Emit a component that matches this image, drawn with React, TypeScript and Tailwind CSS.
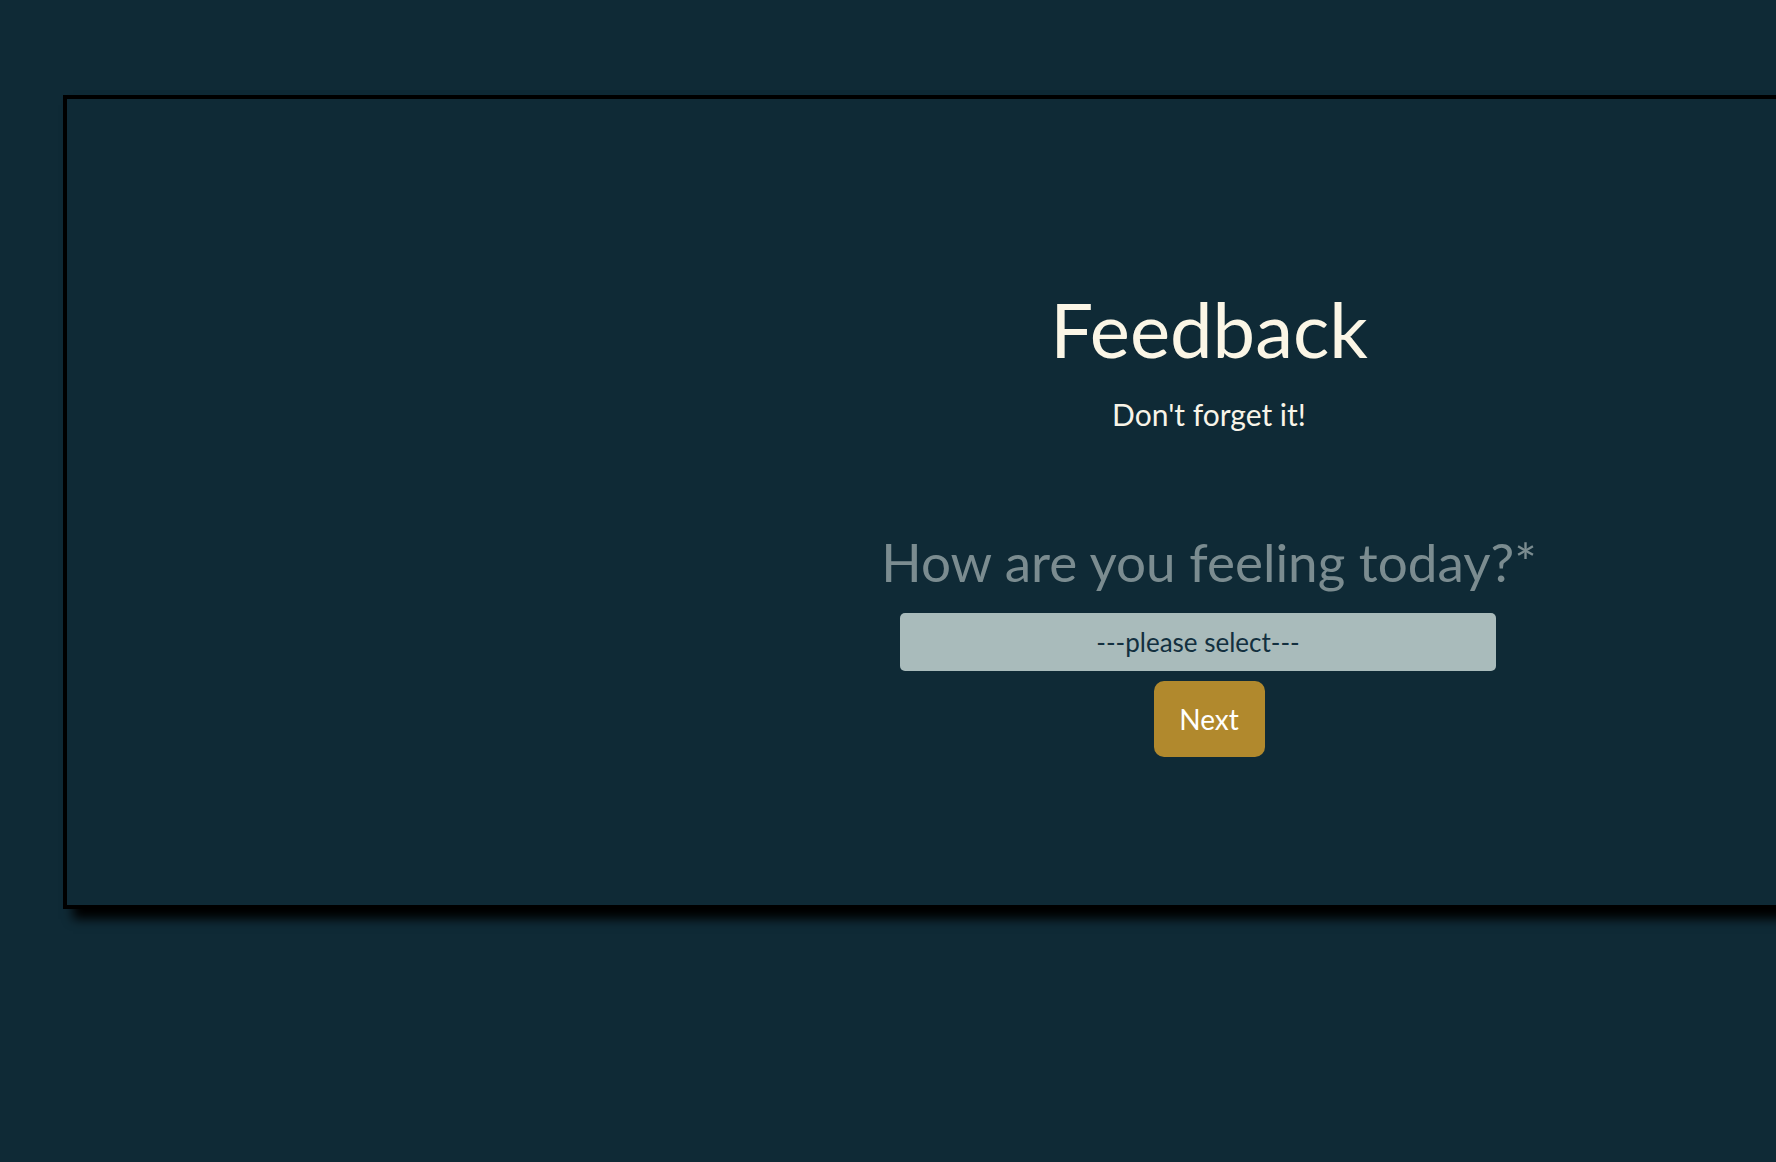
export default function App() {
  return (
    <div className="h-[1162px] w-full overflow-hidden bg-[#0f2a36] pl-[63px] pt-[95px] font-['Lato',sans-serif]">
      {/* Card runs past the right edge of the viewport */}
      <div className="h-[814px] w-[2400px] border-4 border-black shadow-[10px_10px_10px_#000]">
        <div className="ml-[842px] flex w-[600px] flex-col items-center pt-[188px]">
          <h1 className="text-[76px] leading-[1.1] text-[#fbf6e6]">Feedback</h1>
          <p className="mt-[25px] text-[30px] leading-tight text-[#f8f4e8]">Don't forget it!</p>

          <label className="mt-[96px] whitespace-nowrap text-[53px] leading-tight text-[#7b8c90]">
            How are you feeling today?*
          </label>
          <select
            defaultValue=""
            className="mr-[22px] mt-[18px] h-[58px] w-[596px] appearance-none rounded-[5px] bg-[#a9bbbb] text-center text-[26px] text-[#13303f] outline-none [text-align-last:center]"
          >
            <option value="">---please select---</option>
            <option value="good">Good</option>
            <option value="okay">Okay</option>
            <option value="bad">Bad</option>
          </select>
          <button className="mt-[10px] h-[76px] w-[111px] rounded-[10px] bg-[#b1892d] text-[28px] text-white">
            Next
          </button>
        </div>
      </div>
    </div>
  );
}
